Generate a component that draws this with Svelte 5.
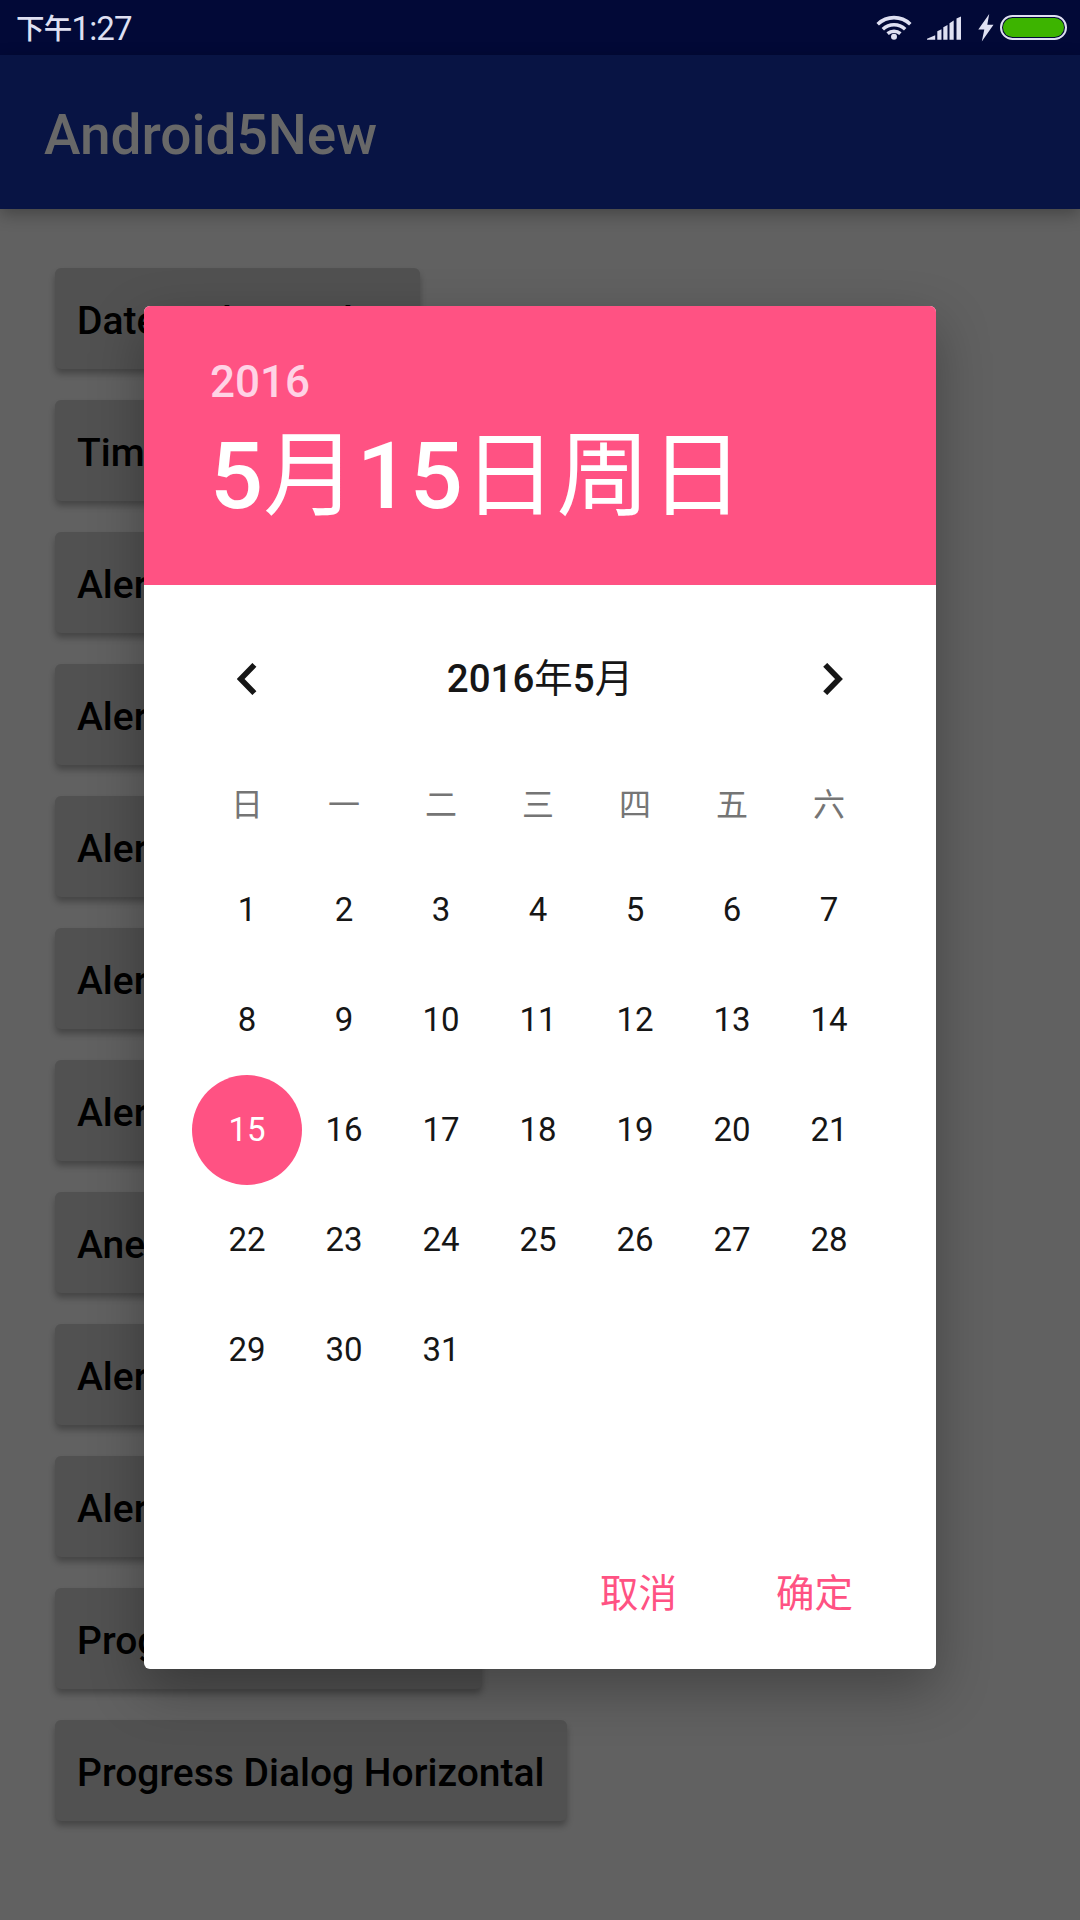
<script>
  const actions = [
    'Date Picker Dialog',
    'Time Picker Dialog',
    'Alert Dialog',
    'Alert Dialog',
    'Alert Dialog',
    'Alert Dialog',
    'Alert Dialog',
    'Anert Dialog',
    'Alert Dialog',
    'Alert Dialog',
    'Progress Dialog Cycle',
    'Progress Dialog Horizontal',
  ];
  const weekdays = ['日', '一', '二', '三', '四', '五', '六'];
  const days = Array.from({ length: 31 }, (_, i) => i + 1);
  let selected = $state(15);
</script>

<div class="screen">
  <header class="status">
    <div class="clock"><span class="ampm">下午</span><span>1:27</span></div>
    <div class="indicators">
      <svg class="wifi" width="36" height="26" viewBox="0 0 36 26">
        <g fill="none" stroke="#dfe0f2" stroke-width="3.6">
          <path d="M1.7 10.2a23.5 23.5 0 0 1 32.6 0" />
          <path d="M6.8 15.2a16.5 16.5 0 0 1 22.4 0" />
          <path d="M11.6 19.6a9.8 9.8 0 0 1 12.8 0" />
        </g>
        <circle cx="18" cy="22.7" r="3" fill="#dfe0f2" />
      </svg>
      <svg class="signal" width="35" height="24" viewBox="0 0 35 24">
        <path
          fill="#dfe0f2"
          d="M0 23.7v-1l8.2-3.5v4.5zM10.3 23.7v-8.5l4.2-2v10.5zM16.3 23.7V11.2l4.2-2.2v14.7zM22.5 23.7V7.2L26.7 4.5v19.2zM29.5 23.7V2.5L34 .5v23.2z"
        />
      </svg>
      <svg class="bolt" width="16" height="28" viewBox="0 0 16 28">
        <path fill="#dfe0f2" d="M11.2 0 .3 15.5h6L3.8 27.5 15.5 10.8H9.3z" />
      </svg>
      <div class="battery"><i></i></div>
    </div>
  </header>

  <div class="appbar">Android5New</div>

  <main>
    {#each actions as label}
      <button class="action">{label}</button>
    {/each}
  </main>

  <section class="dialog">
    <div class="heading">
      <div class="year">2016</div>
      <div class="date">5<span>月</span>15<span>日周日</span></div>
    </div>
    <div class="month">
      <svg width="20" height="32" viewBox="0 0 20 32">
        <path d="M17.4 1.9 3.6 16l13.8 14.1" fill="none" stroke="#161616" stroke-width="5.6" />
      </svg>
      <div class="name">2016<span>年</span>5<span>月</span></div>
      <svg width="20" height="32" viewBox="0 0 20 32">
        <path d="M2.2 1.9 16 16 2.2 30.1" fill="none" stroke="#161616" stroke-width="5.6" />
      </svg>
    </div>
    <div class="grid weekdays">
      {#each weekdays as w}<div>{w}</div>{/each}
    </div>
    <div class="grid days">
      {#each days as d}
        <button class="day" class:selected={d === selected} onclick={() => (selected = d)}>{d}</button>
      {/each}
    </div>
    <footer>
      <button>取消</button>
      <button>确定</button>
    </footer>
  </section>
</div>

<style>
  :global(body) {
    margin: 0;
  }
  .screen {
    position: relative;
    width: 1080px;
    height: 1920px;
    overflow: hidden;
    background: #616161;
    font-family: Roboto, 'Noto Sans CJK SC', sans-serif;
  }
  button {
    margin: 0;
    padding: 0;
    border: 0;
    background: none;
    font-family: inherit;
    color: inherit;
  }
  .status {
    height: 55px;
    box-sizing: border-box;
    padding: 0 13px 0 16px;
    display: flex;
    justify-content: space-between;
    background: #020937;
    color: #dfe0f2;
  }
  .clock {
    display: flex;
    font-size: 33px;
    letter-spacing: -0.8px;
    line-height: 57px;
  }
  .ampm {
    font-family: 'Noto Sans CJK SC', sans-serif;
    font-size: 28.5px;
    font-weight: 500;
    line-height: 54px;
  }
  .indicators {
    display: flex;
    align-items: flex-start;
  }
  .wifi {
    margin: 14px 15px 0 0;
  }
  .signal {
    margin: 16px 16px 0 0;
  }
  .bolt {
    margin: 14px 6px 0 0;
  }
  .battery {
    box-sizing: border-box;
    width: 67px;
    height: 25px;
    margin-top: 15px;
    padding: 1px;
    border: 2px solid #dfe0f2;
    border-radius: 13px;
  }
  .battery i {
    display: block;
    height: 100%;
    border-radius: 10px;
    background: #3db400;
  }
  .appbar {
    position: relative;
    height: 154px;
    padding-left: 44px;
    background: #081444;
    color: #686868;
    font-size: 55px;
    font-weight: 500;
    line-height: 160px;
    box-sizing: border-box;
    box-shadow: 0 5px 16px rgba(0, 0, 0, 0.3);
  }
  main {
    display: flex;
    flex-direction: column;
    align-items: flex-start;
    gap: 31px;
    padding: 59px 0 0 55px;
  }
  .action {
    flex: none;
    height: 101px;
    padding: 0 22.5px 0 22px;
    border-radius: 6px;
    background: #515151;
    color: #000;
    font-size: 39px;
    font-weight: 500;
    line-height: 107px;
    white-space: nowrap;
    box-shadow: 0 5px 6px rgba(0, 0, 0, 0.28);
  }
  .dialog {
    position: absolute;
    left: 144px;
    top: 306px;
    width: 792px;
    height: 1363px;
    display: flex;
    flex-direction: column;
    border-radius: 6px;
    overflow: hidden;
    background: #fff;
    color: #161616;
    box-shadow: 0 20px 54px rgba(0, 0, 0, 0.3);
  }
  .heading {
    height: 279px;
    box-sizing: border-box;
    padding: 50px 66px 0;
    background: #ff5283;
    color: #fff;
    font-weight: 500;
  }
  .year {
    height: 55px;
    font-size: 44px;
    line-height: 53px;
    color: #ffd3e5;
  }
  .date {
    height: 130px;
    font-size: 93.5px;
    line-height: 130px;
    white-space: nowrap;
  }
  .date span,
  .name span {
    font-weight: 400;
  }
  .month {
    height: 188px;
    box-sizing: border-box;
    padding: 0 93px;
    display: flex;
    align-items: center;
    justify-content: space-between;
  }
  .name {
    font-size: 38.5px;
    font-weight: 500;
    line-height: 50px;
  }
  .grid {
    display: grid;
    grid-template-columns: repeat(7, 97px);
    padding-left: 54.5px;
  }
  .weekdays {
    height: 82px;
    color: #757575;
    font-size: 32px;
    line-height: 64px;
    text-align: center;
  }
  .days {
    grid-auto-rows: 110px;
    justify-items: center;
    height: 660px;
  }
  .day {
    width: 97px;
    height: 110px;
    font-size: 33px;
    line-height: 110px;
  }
  .day.selected {
    width: 110px;
    margin: 0 -6.5px;
    border-radius: 50%;
    background: #ff5283;
    color: #fff;
  }
  footer {
    flex: 1;
    display: flex;
    justify-content: flex-end;
    gap: 99px;
    padding: 54px 83px 0 0;
    align-items: flex-start;
  }
  footer button {
    font-size: 38.5px;
    line-height: 50px;
    color: #ff5283;
  }
</style>
